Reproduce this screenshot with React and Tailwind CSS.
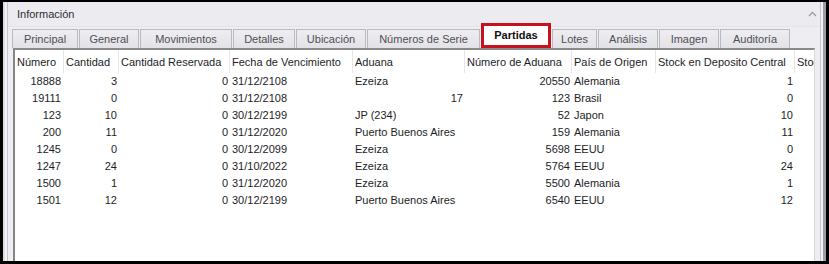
const TABS = [
  { label: 'Principal', w: 66 },
  { label: 'General', w: 60 },
  { label: 'Movimientos', w: 92 },
  { label: 'Detalles', w: 62 },
  { label: 'Ubicación', w: 70 },
  { label: 'Números de Serie', w: 113 },
  { label: 'Partidas', w: 70, active: true },
  { label: 'Lotes', w: 45 },
  { label: 'Análisis', w: 60 },
  { label: 'Imagen', w: 60 },
  { label: 'Auditoría', w: 70 },
];

const COLS = [
  { label: 'Número', w: 'w-[49px]' },
  { label: 'Cantidad', w: 'w-[55px]' },
  { label: 'Cantidad Reservada', w: 'w-[111px]' },
  { label: 'Fecha de Vencimiento', w: 'w-[123px]' },
  { label: 'Aduana', w: 'w-[112px]' },
  { label: 'Número de Aduana', w: 'w-[107px]' },
  { label: 'País de Origen', w: 'w-[84px]' },
  { label: 'Stock en Deposito Central', w: 'w-[139px]' },
  { label: 'Stock', w: 'w-[60px]' },
];

const ROWS = [
  ['18888', '3', '0', '31/12/2108', 'Ezeiza', '20550', 'Alemania', '1'],
  ['19111', '0', '0', '31/12/2108', '17', '123', 'Brasil', '0'],
  ['123', '10', '0', '30/12/2199', 'JP (234)', '52', 'Japon', '10'],
  ['200', '11', '0', '31/12/2020', 'Puerto Buenos Aires', '159', 'Alemania', '11'],
  ['1245', '0', '0', '30/12/2099', 'Ezeiza', '5698', 'EEUU', '0'],
  ['1247', '24', '0', '31/10/2022', 'Ezeiza', '5764', 'EEUU', '24'],
  ['1500', '1', '0', '31/12/2020', 'Ezeiza', '5500', 'Alemania', '1'],
  ['1501', '12', '0', '30/12/2199', 'Puerto Buenos Aires', '6540', 'EEUU', '12'],
];

// aligned right unless text column
const isRight = (ci, val) => {
  if (ci === 3 || ci === 6) return false;
  if (ci === 4) return /^\d+$/.test(val);
  return true;
};

function Tab({ tab }) {
  if (tab.active) {
    return (
      <div
        className="relative z-10 -mt-[2px] h-[25px] border-[3px] border-[#c5121c] bg-white flex items-center justify-center font-bold text-[#111] text-[11px]"
        style={{ width: tab.w }}
      >
        {tab.label}
      </div>
    );
  }
  return (
    <div
      className="h-[19px] border border-b-0 border-[#b9b9c2] bg-gradient-to-b from-[#eeeef2] to-[#e2e2e7] flex items-center justify-center text-[#4f4f55] text-[11px]"
      style={{ width: tab.w }}
    >
      {tab.label}
    </div>
  );
}

export default function App() {
  return (
    <div
      className="w-[829px] h-[264px] bg-black pt-[2px] pl-[3px] pr-[3px] pb-[3px] overflow-hidden"
      style={{ fontFamily: '"Liberation Sans", Arial, sans-serif' }}
    >
      <div className="h-full border-l-2 border-l-[#dcdce2] border-r-[3px] border-r-[#9d9da6] px-[2px] bg-[#f2f2f6]">
        <div className="h-full flex flex-col border-x border-[#c6c6ce] bg-[#eeeef2] overflow-hidden">
          <div className="h-[25px] flex items-center justify-between pl-[9px] pr-[2px] border-b border-[#e3e3e8] bg-[#ececf0] shrink-0">
            <span className="text-[11px] text-[#2e2e32]">Información</span>
            <svg width="9" height="6" viewBox="0 0 9 6" className="mr-[1px]">
              <polyline points="1,5 4.5,1.5 8,5" fill="none" stroke="#9a9aa0" strokeWidth="1.3" />
            </svg>
          </div>
          <div className="flex items-end gap-[1px] pl-[4px] mt-[2px] h-[19px] shrink-0">
            {TABS.map((t) => (
              <Tab key={t.label} tab={t} />
            ))}
          </div>
          <div className="flex-1 ml-[5px] mr-[5px] border-t-2 border-t-[#8a8a8a] border-l-2 border-l-[#858585] border-r border-r-[#d8d8dc] bg-white overflow-hidden text-[11px] text-[#1d1d1f]">
            <div className="flex h-[23px] items-center whitespace-nowrap">
              {COLS.map((c, i) => (
                <div
                  key={c.label}
                  className={`${c.w} shrink-0 h-full flex items-center pl-[2px] pt-[2px] border-r border-[#e6e6ea] overflow-hidden`}
                >
                  {c.label}
                </div>
              ))}
            </div>
            {ROWS.map((row) => (
              <div key={row[0]} className="flex h-[17px] items-center whitespace-nowrap">
                {row.map((val, ci) => (
                  <div
                    key={ci}
                    className={`${COLS[ci].w} shrink-0 px-[2px] ${isRight(ci, val) ? 'text-right' : 'text-left'} ${ci === 0 ? 'pr-[3px]' : ''}`}
                  >
                    {val}
                  </div>
                ))}
              </div>
            ))}
          </div>
        </div>
      </div>
    </div>
  );
}
